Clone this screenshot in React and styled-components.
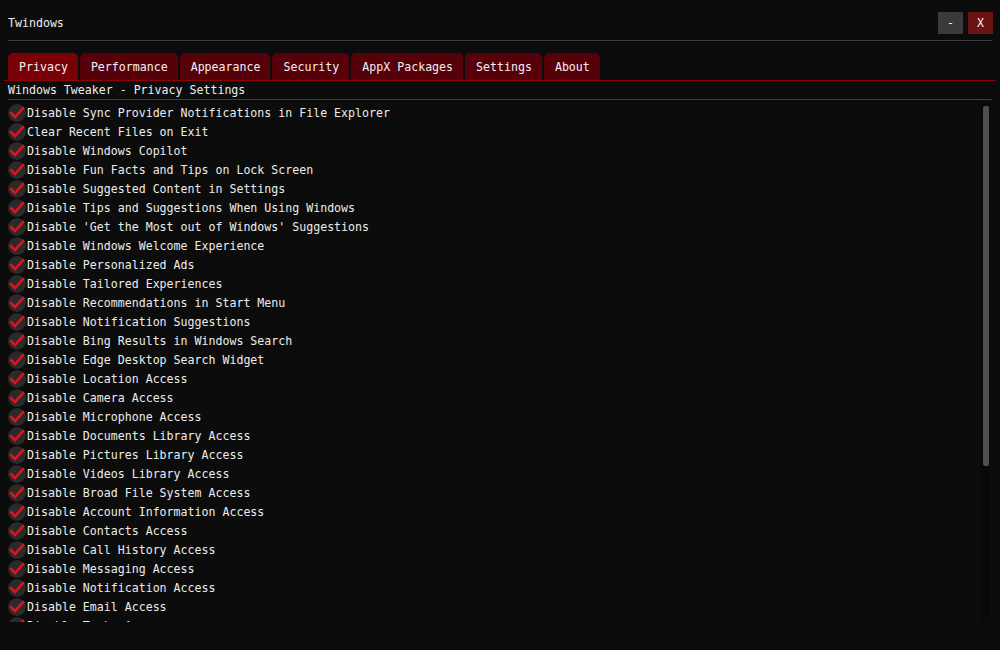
import React from 'react'
import styled, { createGlobalStyle } from 'styled-components'

const GlobalStyle = createGlobalStyle`
  html, body {
    margin: 0;
    padding: 0;
    background: #0c0c0c;
    overflow: hidden;
  }
  body {
    font-family: "DejaVu Sans Mono", "Liberation Mono", monospace;
    font-size: 11.6px;
    color: #ececec;
  }
`

const Window = styled.div`
  height: 650px;
  box-sizing: border-box;
  padding: 0 8px;
  display: flex;
  flex-direction: column;
  background: #0c0c0c;
`

const TitleBar = styled.div`
  display: flex;
  align-items: center;
  justify-content: space-between;
  height: 41px;
  box-sizing: border-box;
  padding-top: 12px;
  padding-bottom: 6px;
  border-bottom: 1px solid #3e3e42;
`

const Title = styled.span`
  line-height: 20px;
`

const WinButtons = styled.div`
  display: flex;
  gap: 5px;
  margin-right: -1px;
`

const WinButton = styled.button`
  width: 25px;
  height: 22px;
  border: none;
  padding: 0;
  font-family: inherit;
  font-size: 11.6px;
  color: #f2f2f2;
  background: ${p => (p.$danger ? '#6b1315' : '#3a3a3a')};
`

const TabBar = styled.div`
  display: flex;
  gap: 2px;
  margin: 12px -4px 0;
  padding: 0 4px;
  border-bottom: 1px solid #8c0008;
`

const Tab = styled.div`
  height: 27px;
  padding: 0 10px 0 11px;
  display: flex;
  align-items: center;
  border-radius: 5px 5px 0 0;
  background: ${p => (p.$active ? '#7a0008' : '#56000a')};
  color: #f0f0f0;
`

const Header = styled.div`
  height: 18px;
  line-height: 19px;
  border-bottom: 1px solid #3e3e48;
`

const ListArea = styled.div`
  display: flex;
  margin-top: 3px;
  margin-right: 2px;
  height: 519px;
`

const Items = styled.div`
  flex: 1;
  overflow: hidden;
`

const ScrollTrack = styled.div`
  width: 10px;
  box-sizing: border-box;
  padding: 3px 1px 3px 3px;
  background: #090909;
`

const ScrollThumb = styled.div`
  height: 360px;
  background: #4f4f4f;
  border-radius: 2px;
`

const Item = styled.label`
  display: flex;
  align-items: center;
  gap: 1px;
  height: 19px;
  white-space: nowrap;
`

const CheckCircle = ({ checked }) => (
  <svg width="18" height="18" viewBox="0 0 18 18">
    <circle cx="9" cy="9" r="9" fill="#2a2a2a" />
    {checked && (
      <polyline
        points="3.2,9.2 7,13 15,4.2"
        fill="none"
        stroke="#dc1420"
        strokeWidth="2.6"
        strokeLinecap="square"
      />
    )}
  </svg>
)

const tabs = ['Privacy', 'Performance', 'Appearance', 'Security', 'AppX Packages', 'Settings', 'About']

const options = [
  'Disable Sync Provider Notifications in File Explorer',
  'Clear Recent Files on Exit',
  'Disable Windows Copilot',
  'Disable Fun Facts and Tips on Lock Screen',
  'Disable Suggested Content in Settings',
  'Disable Tips and Suggestions When Using Windows',
  "Disable 'Get the Most out of Windows' Suggestions",
  'Disable Windows Welcome Experience',
  'Disable Personalized Ads',
  'Disable Tailored Experiences',
  'Disable Recommendations in Start Menu',
  'Disable Notification Suggestions',
  'Disable Bing Results in Windows Search',
  'Disable Edge Desktop Search Widget',
  'Disable Location Access',
  'Disable Camera Access',
  'Disable Microphone Access',
  'Disable Documents Library Access',
  'Disable Pictures Library Access',
  'Disable Videos Library Access',
  'Disable Broad File System Access',
  'Disable Account Information Access',
  'Disable Contacts Access',
  'Disable Call History Access',
  'Disable Messaging Access',
  'Disable Notification Access',
  'Disable Email Access',
  'Disable Tasks Access',
]

export default function App() {
  return (
    <>
      <GlobalStyle />
      <Window>
        <TitleBar>
          <Title>Twindows</Title>
          <WinButtons>
            <WinButton>-</WinButton>
            <WinButton $danger>X</WinButton>
          </WinButtons>
        </TitleBar>

        <TabBar>
          {tabs.map(t => (
            <Tab key={t} $active={t === 'Privacy'}>{t}</Tab>
          ))}
        </TabBar>

        <Header>Windows Tweaker - Privacy Settings</Header>

        <ListArea>
          <Items>
            {options.map(o => (
              <Item key={o}>
                <CheckCircle checked />
                <span>{o}</span>
              </Item>
            ))}
          </Items>
          <ScrollTrack>
            <ScrollThumb />
          </ScrollTrack>
        </ListArea>
      </Window>
    </>
  )
}
